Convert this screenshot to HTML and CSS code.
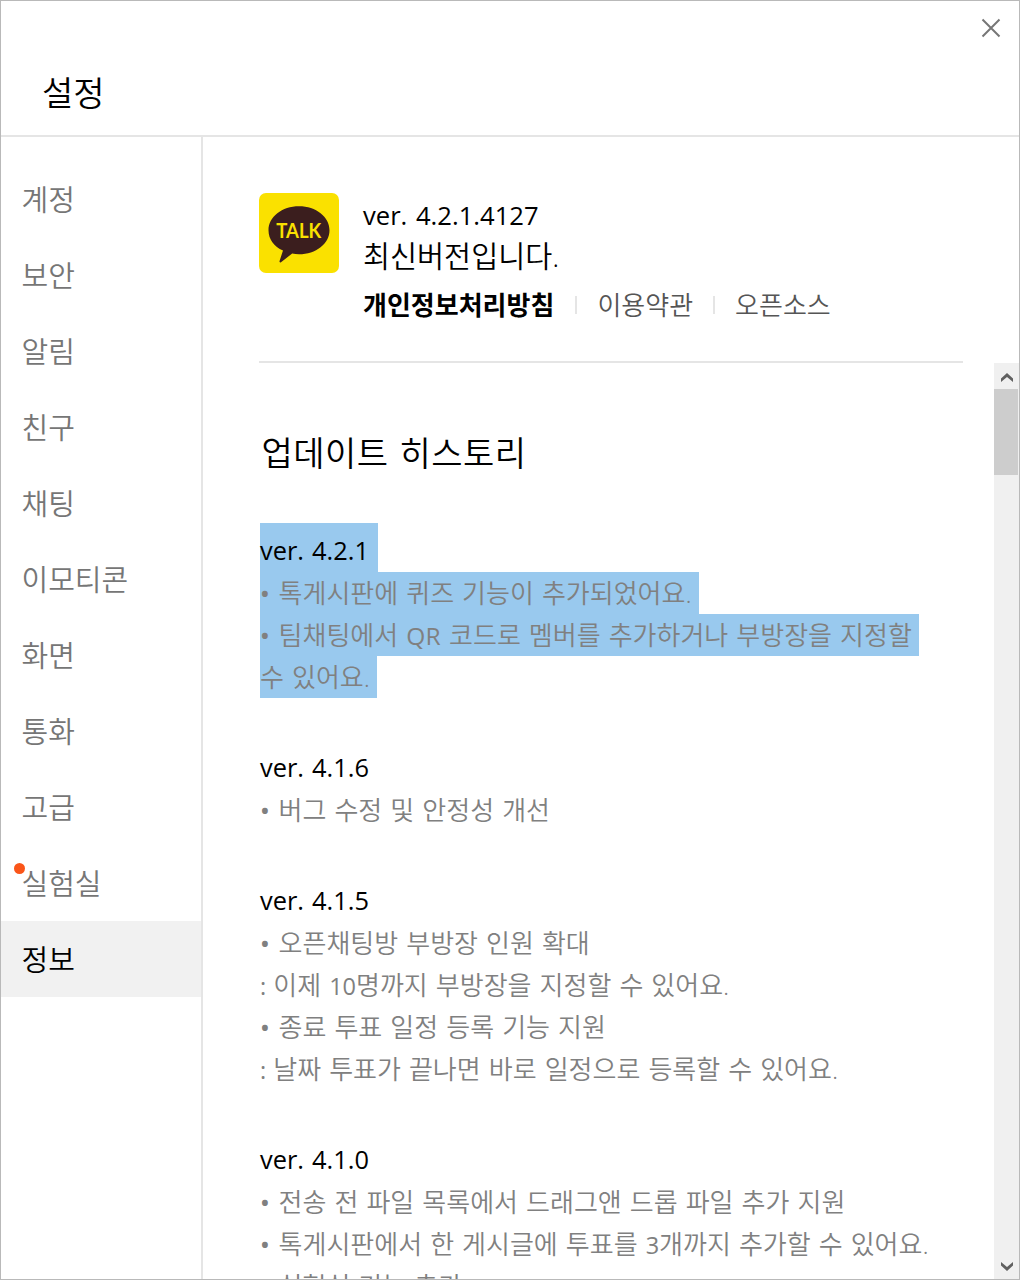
FILE: index.html
```html
<!DOCTYPE html>
<html lang="ko">
<head>
<meta charset="utf-8">
<title>설정</title>
<link rel="stylesheet" href="styles.css">
</head>
<body>
<div class="window">
  <header class="header">
    <h1 class="title">설정</h1>
    <button class="close" aria-label="닫기"><svg width="20" height="20" viewBox="0 0 20 20"><path d="M1.500 1.500l17 17M18.500 1.500l-17 17" fill="none" stroke="#767676" stroke-width="2"/></svg></button>
  </header>
  <div class="main">
    <nav class="menu">
      <a class="item">계정</a>
      <a class="item">보안</a>
      <a class="item">알림</a>
      <a class="item">친구</a>
      <a class="item">채팅</a>
      <a class="item">이모티콘</a>
      <a class="item">화면</a>
      <a class="item">통화</a>
      <a class="item">고급</a>
      <a class="item"><i class="dot"></i>실험실</a>
      <a class="item active">정보</a>
    </nav>
    <div class="content">
      <section class="about">
        <svg class="logo" width="80" height="80" viewBox="0 0 80 80">
          <rect width="80" height="80" rx="7" fill="#fae100"/>
          <path d="M40 13.200c17 0 30.500 10.500 30.500 24S57 61.200 40 61.200c-2.500 0-4.500-.2-6.800-.7L22 69.200c-1 .6-1.800 0-1.500-1L24 57.500C15 53.500 9.500 46.200 9.500 37.200c0-13.500 13.500-24 30.500-24z" fill="#3b1e1e"/>
          <text class="logo-text" x="39.800" y="45.300" text-anchor="middle" textLength="45" lengthAdjust="spacingAndGlyphs">TALK</text>
        </svg>
        <div class="info">
          <p class="version">ver. 4.2.1.4127</p>
          <p class="status">최신버전입니다.</p>
          <div class="links">
            <a class="link strong">개인정보처리방침</a>
            <a class="link">이용약관</a>
            <a class="link">오픈소스</a>
          </div>
        </div>
      </section>
      <div class="scroller">
        <section class="history">
          <h2 class="subtitle">업데이트 히스토리</h2>
          <article class="release selected">
            <h3 class="ver">ver. 4.2.1</h3>
            <p class="line"><span class="bullet">•</span> 톡게시판에 퀴즈 기능이 추가되었어요.</p>
            <p class="line"><span class="bullet">•</span> 팀채팅에서 <span class="latin wide">QR</span> 코드로 멤버를 추가하거나 부방장을 지정할</p>
            <p class="line">수 있어요.</p>
          </article>
          <article class="release">
            <h3 class="ver">ver. 4.1.6</h3>
            <p class="line"><span class="bullet">•</span> 버그 수정 및 안정성 개선</p>
          </article>
          <article class="release">
            <h3 class="ver">ver. 4.1.5</h3>
            <p class="line"><span class="bullet">•</span> 오픈채팅방 부방장 인원 확대</p>
            <p class="line"><span class="latin colon">:</span> 이제 <span class="latin">10</span>명까지 부방장을 지정할 수 있어요.</p>
            <p class="line"><span class="bullet">•</span> 종료 투표 일정 등록 기능 지원</p>
            <p class="line"><span class="latin colon">:</span> 날짜 투표가 끝나면 바로 일정으로 등록할 수 있어요.</p>
          </article>
          <article class="release">
            <h3 class="ver">ver. 4.1.0</h3>
            <p class="line"><span class="bullet">•</span> 전송 전 파일 목록에서 드래그앤 드롭 파일 추가 지원</p>
            <p class="line"><span class="bullet">•</span> 톡게시판에서 한 게시글에 투표를 <span class="latin">3</span>개까지 추가할 수 있어요.</p>
            <p class="line"><span class="bullet">•</span> 실험실 기능 추가</p>
          </article>
        </section>
        <div class="scrollbar">
          <span class="arrow"><svg width="12" height="10" viewBox="0 0 12 10"><path d="M0 9V5.500L6 0l6 5.500V9L6 4z" fill="#606060"/></svg></span>
          <span class="thumb"></span>
          <span class="arrow down"><svg width="12" height="10" viewBox="0 0 12 10"><path d="M0 1v3.500L6 10l6-5.500V1L6 6z" fill="#606060"/></svg></span>
        </div>
      </div>
    </div>
  </div>
</div>
</body>
</html>
```

FILE: styles.css
```css
* { box-sizing: border-box; margin: 0; padding: 0; }
body {
  font-family: "Open Sans", "Noto Sans CJK KR", sans-serif;
  font-weight: 350;
  color: #000;
  background: #fff;
}
.window {
  width: 1020px;
  height: 1280px;
  border: 1px solid #b9b9b9;
  display: flex;
  flex-direction: column;
  overflow: hidden;
}
.header {
  flex: none;
  height: 136px;
  border-bottom: 2px solid #e5e5e5;
  display: flex;
  justify-content: space-between;
  padding: 17px 18px 0 41px;
}
.title { font-size: 34px; font-weight: 350; line-height: 50px; margin-top: 50px; }
.close { width: 20px; height: 20px; border: 0; background: none; }
.close svg { display: block; }
.main { flex: 1; min-height: 0; display: flex; }
.menu {
  flex: none;
  width: 202px;
  border-right: 2px solid #e5e5e5;
  padding-top: 24px;
}
.item {
  position: relative;
  display: block;
  height: 76px;
  line-height: 78px;
  padding-left: 20.5px;
  font-size: 29px;
  color: #767676;
}
.item.active { background: #f1f1f1; color: #000; }
.dot {
  position: absolute;
  left: 13px;
  top: 18px;
  width: 11px;
  height: 11px;
  border-radius: 50%;
  background: #fa5519;
}
.content { flex: 1; min-width: 0; display: flex; flex-direction: column; }
.about {
  flex: none;
  height: 226px;
  width: 704px;
  margin-left: 56px;
  padding-top: 56px;
  border-bottom: 2px solid #e5e5e5;
  display: flex;
  gap: 24px;
}
.logo { flex: none; }
.logo-text { font: 700 21px Lato, sans-serif; fill: #fae100; }
.info { padding-top: 3px; }
.version { font-size: 25.6px; line-height: 40px; font-weight: 400; word-spacing: 2px; }
.status { font-size: 29.4px; line-height: 40px; }
.links { display: flex; align-items: center; margin-top: 12px; height: 34px; }
.link { font-size: 26px; line-height: 34px; color: #555; }
.link.strong { font-weight: 700; color: #000; }
.link + .link { display: flex; align-items: center; }
.link + .link::before {
  content: "";
  width: 2px;
  height: 18px;
  margin: 0 20px 0 21px;
  background: #e5e5e5;
}
.link:last-child::before { margin-left: 20px; }
.scroller { flex: 1; min-height: 0; display: flex; justify-content: space-between; }
.history { padding-left: 57px; overflow: hidden; white-space: nowrap; }
.subtitle {
  font-size: 34px;
  font-weight: 350;
  line-height: 50px;
  letter-spacing: 0.5px;
  word-spacing: 1.5px;
  margin: 65px 0 45px 1.5px;
}
.release { margin-bottom: 42px; }
.ver {
  width: fit-content;
  height: 49px;
  padding-top: 6px;
  font-size: 25.4px;
  line-height: 42px;
  font-weight: 400;
  word-spacing: 1.5px;
}
.line {
  width: fit-content;
  height: 42px;
  line-height: 42px;
  font-size: 26px;
  word-spacing: 1.3px;
  color: #808080;
}
.bullet { display: inline-block; width: 10.5px; font-family: "Noto Sans", sans-serif; font-weight: 400; }
.latin { font-size: 23.5px; font-weight: 400; }
.latin.wide { font-size: 24.5px; letter-spacing: 0.3px; }
.latin.colon { margin-right: -1px; }
.selected .ver, .selected .line { background: #99c9ee; }
.selected .ver { padding-right: 9px; }
.selected .line { padding-right: 7.5px; }
.scrollbar {
  flex: none;
  width: 25px;
  background: #f0f0f0;
  display: flex;
  flex-direction: column;
}
.arrow { height: 26px; display: flex; align-items: center; padding: 3px 0 0 7px; }
.thumb { width: 24px; height: 86px; background: #cdcdcd; }
.arrow.down { margin-top: auto; padding-top: 0; }
```
